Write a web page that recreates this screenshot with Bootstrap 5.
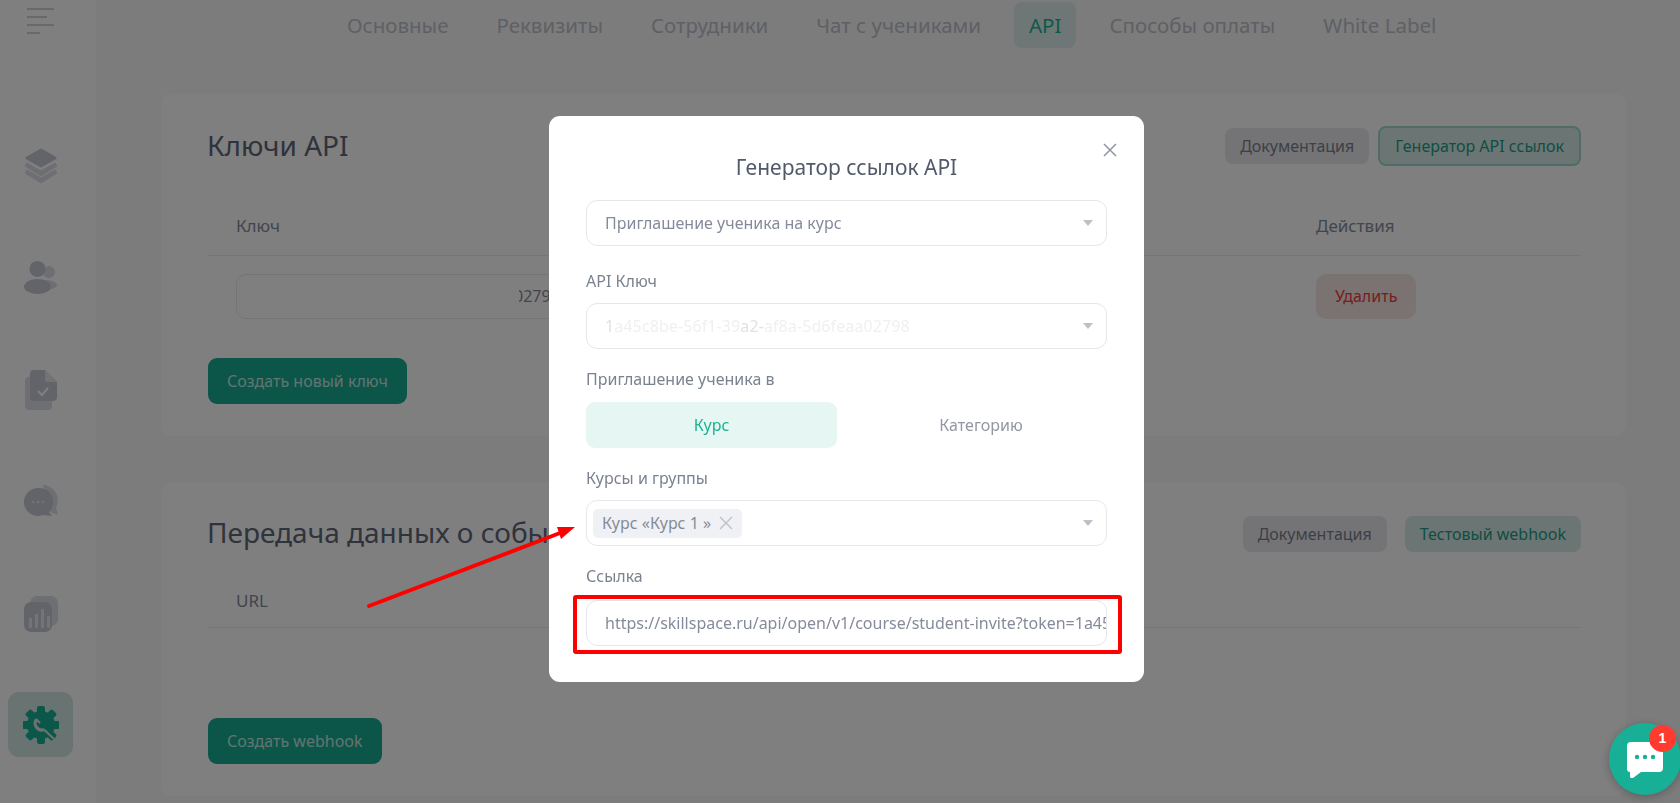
<!DOCTYPE html>
<html lang="ru">
<head>
  <meta charset="UTF-8">
  <title>Настройки – API</title>
  <link href="https://cdn.jsdelivr.net/npm/bootstrap@5.3.3/dist/css/bootstrap.min.css" rel="stylesheet">
  <style>
    html, body { height: 100%; overflow: hidden; }
    body { font-family: "Noto Sans", "Open Sans", sans-serif; background: #f9f9f9; color: #5f6678; }

    /* Боковая панель */
    .side-bar { width: 96px; height: 803px; background: #fff; flex: none; padding-top: 8px; }
    .burger { width: 27px; margin-left: 27px; height: 28px; }
    .burger i { display: block; height: 2px; background: #d0d2d6; margin-bottom: 6px; }
    .burger i:nth-child(2) { width: 20px; }
    .burger i:nth-child(4) { width: 13px; }
    .side-item { width: 65px; height: 65px; margin-left: 8px; border-radius: 11px; }
    .side-item + .side-item { margin-top: 47px; }
    .side-item + .side-item.on { margin-top: 46px; }
    .side-list { margin-top: 97px; }
    .side-item.on { background: #d2e6e2; }

    /* Вкладки */
    .top-tabs { margin-left: 236px; padding-top: 2px; gap: 18px; height: 94px; align-items: flex-start; }
    .top-tabs .nav-link { color: #bdc0ca; font-size: 20.5px; line-height: 46px; padding: 0 15px; border-radius: 8px; }
    .top-tabs .nav-link.active { background: #dcefeb; color: #1ab394; }

    /* Карточки */
    .main-col { width: 1584px; }
    .pane { margin-left: 65px; width: 1465px; background: #fff; border: 0; border-radius: 11px; padding: 32px 45px 32px 47px; }
    .pane + .pane { margin-top: 46px; }
    .pane-head { height: 40px; }
    .pane-title { font-size: 28px; font-weight: 400; color: #5f6678; margin: 0 0 0 -1px; line-height: 40px; padding-bottom: 3px; }
    .pane-table { margin: 0; --bs-table-bg: transparent; }
    .pane-table th { font-weight: 400; font-size: 17px; color: #858b9a; border-bottom: 1px solid #eaebee; padding: 0 0 16px 28px; height: 89px; vertical-align: bottom; }
    .pane-table td { border: 0; padding: 18px 0 0 28px; }
    .pane-table th.act-col { width: 293px; }
    .pane-table.short th { height: 74px; padding-bottom: 14px; }
    .key-box { height: 45px; border: 1px solid #e9eaec; border-radius: 10px; width: 800px; font-size: 16px; line-height: 43px; color: #858b9a; padding-left: 282px; }
    .key-box span { display: block; width: 40px; overflow: hidden; text-indent: -5px; white-space: nowrap; }

    .btn-pair { gap: 18px; }
    .btn-soft { font-size: 16px; border: 0; border-radius: 8px; padding: 0 15px; height: 36px; line-height: 36px; }
    .btn-grey { background: #e8e9ed; color: #7b7f8a; }
    .btn-mint { background: #d6ebe7; color: #1f9c85; }
    .btn-mint.ring { border: 2px solid #9fd8cc; height: 40px; line-height: 36px; margin-left: 9px; }
    .btn-red { background: #f6e4e4; color: #ee3a3a; height: 45px; line-height: 45px; padding: 0 19px; border-radius: 10px; }
    .btn-main { background: #18ab93; color: #c5e8e0; font-size: 16px; height: 46px; padding: 0 19px; border: 0; border-radius: 9px; }
    .btn-main:hover { background: #18ab93; color: #c5e8e0; }
    .foot-key { margin-top: 39px; }
    .foot-hook { margin-top: 90px; }

    /* Модальное окно */
    .gen-dialog { max-width: none; width: 595px; margin: 116px 0 0 549px; }
    .gen-dialog .modal-content { border: 0; border-radius: 11px; height: 566px; padding: 0 37px; display: block; }
    .gen-title { text-align: center; font-size: 21px; font-weight: 400; color: #525a69; margin: 0; padding-top: 37px; line-height: 28px; height: 84px; }
    .gen-close { position: absolute; top: 26px; right: 26px; width: 16px; height: 16px; padding: 0; border: 0; background: none; line-height: 0; }
    .gen-group { margin-bottom: 19px; }
    .gen-group:first-of-type { margin-bottom: 24px; }
    .gen-label { display: block; font-size: 16px; line-height: 22px; margin-bottom: 11px; color: #7a8290; }
    .gen-label.gap-m { margin-bottom: 12px; }
    .gen-label.gap-l { margin-bottom: 13px; }
    .gen-field { height: 46px; border: 1px solid #e6e7ea; border-radius: 11px; padding: 0 13px 0 18px; font-size: 16px; color: #858b9a; white-space: nowrap; overflow: hidden; }
    .gen-field::after { content: ""; border: 5px solid transparent; border-top: 6px solid #bcc0c8; border-bottom: 0; flex: none; }
    .gen-field.plain::after { display: none; }
    .gen-field.plain { padding-right: 0; }
    .gen-field.chips { padding-left: 6px; }
    .key-faint { color: #eff0f0; letter-spacing: .1px; filter: blur(.5px); }
    .key-faint b { font-weight: 400; color: #e0e2e5; }
    .gen-switch { height: 46px; margin-bottom: 19px; }
    .gen-switch div { flex: none; border-radius: 9px; line-height: 46px; text-align: center; font-size: 16px; color: #9297a3; }
    .gen-switch .picked { width: 251px; background: #e6f6f2; color: #1ab394; }
    .gen-switch .rest { width: 270px; padding-left: 18px; }
    .gen-chip { height: 29px; background: #f0f1f5; border-radius: 5px; padding: 0 9px; line-height: 29px; color: #858b9a; }

    /* Чат-виджет */
    .chat-fab { position: fixed; z-index: 1060; left: 1609px; top: 723px; width: 72px; height: 72px; border-radius: 50%; background: #17b096; box-shadow: 0 2px 10px rgba(0,0,0,.25); }
    .chat-fab em { position: absolute; left: 40px; top: 2px; width: 27px; height: 27px; border-radius: 50%; background: #ff3b30; color: #fff; font: 700 14px/27px "Liberation Sans", sans-serif; text-align: center; }
    .note-layer { position: fixed; inset: 0; z-index: 1070; pointer-events: none; }
  </style>
</head>
<body>
  <div class="d-flex">
    <!-- Боковая панель -->
    <aside class="side-bar">
      <div class="burger"><i></i><i></i><i></i><i></i></div>
      <div class="side-list">
        <div class="side-item d-flex align-items-center justify-content-center">
          <svg width="32" height="36" viewBox="0 0 32 36">
            <path d="M2 22 16 30 30 22 32 25 16 35 0 25Z" fill="#dcdee4" stroke="#dcdee4" stroke-linejoin="round"/>
            <path d="M2 15 16 23 30 15 32 18 16 28 0 18Z" fill="#dcdee4" stroke="#dcdee4" stroke-linejoin="round"/>
            <path d="M16 2 30 10 16 18 2 10Z" fill="#c6c9d2" stroke="#c6c9d2" stroke-width="3" stroke-linejoin="round"/>
          </svg>
        </div>
        <div class="side-item d-flex align-items-center justify-content-center">
          <svg width="33" height="33" viewBox="0 0 33 33"><circle cx="25" cy="11" r="6" fill="#dcdee4"/><ellipse cx="21" cy="24" rx="12" ry="5" fill="#dcdee4"/><circle cx="13.500" cy="8" r="8" fill="#c6c9d2"/><ellipse cx="13.500" cy="25.500" rx="13.500" ry="7.500" fill="#c6c9d2"/></svg>
        </div>
        <div class="side-item d-flex align-items-center justify-content-center">
          <svg width="32" height="40" viewBox="0 0 32 40"><rect x="0" y="7" width="27" height="33" rx="4" fill="#dcdee4"/><path d="M9 0h11l12 12v15a4 4 0 0 1-4 4H9a4 4 0 0 1-4-4V4a4 4 0 0 1 4-4Z" fill="#c6c9d2"/><path d="M20 0l12 12H22a2 2 0 0 1-2-2Z" fill="#e4e6ea"/><path d="M13 21l4 4 6-7" fill="none" stroke="#fff" stroke-width="2"/></svg>
        </div>
        <div class="side-item d-flex align-items-center justify-content-center">
          <svg width="34" height="34" viewBox="0 0 34 34"><path d="M19 0a15 15 0 0 1 13 22l2 8-8-3Z" fill="#dcdee4"/><path d="M15 3a14 14 0 0 1 10 24l3 4-9-1A14 14 0 1 1 15 3Z" fill="#c6c9d2"/><g fill="#e4e6ea"><circle cx="9" cy="17" r="1.3"/><circle cx="14" cy="17" r="1.3"/><circle cx="19" cy="17" r="1.3"/></g></svg>
        </div>
        <div class="side-item d-flex align-items-center justify-content-center">
          <svg width="34" height="36" viewBox="0 0 34 36"><rect x="6" y="0" width="28" height="30" rx="7" fill="#dcdee4"/><rect x="0" y="6" width="28" height="30" rx="7" fill="#c6c9d2"/><g fill="#e6e8ec"><rect x="5" y="22" width="3" height="10"/><rect x="11" y="18" width="3" height="14"/><rect x="17" y="13" width="3" height="19"/><rect x="23" y="20" width="3" height="12"/></g></svg>
        </div>
        <div class="side-item on d-flex align-items-center justify-content-center">
          <svg width="36" height="38" viewBox="0 0 36 38">
            <g fill="#17b096">
              <circle cx="18" cy="19" r="14"/>
              <rect x="14" y="0" width="8" height="38" rx="2"/>
              <rect x="14" y="0" width="8" height="38" rx="2" transform="rotate(45 18 19)"/>
              <rect x="14" y="0" width="8" height="38" rx="2" transform="rotate(90 18 19)"/>
              <rect x="14" y="0" width="8" height="38" rx="2" transform="rotate(135 18 19)"/>
            </g>
            <path d="M13.500 13.500A6.500 6.500 0 0 0 21 23.500" fill="none" stroke="#d2e6e2" stroke-width="3.200"/>
            <path d="M13 13 17 17M21 23.500 31 33" fill="none" stroke="#d2e6e2" stroke-width="2.200"/>
          </svg>
        </div>
      </div>
    </aside>

    <div class="main-col">
      <!-- Вкладки -->
      <ul class="nav top-tabs">
        <li class="nav-item"><a class="nav-link" href="#">Основные</a></li>
        <li class="nav-item"><a class="nav-link" href="#">Реквизиты</a></li>
        <li class="nav-item"><a class="nav-link" href="#">Сотрудники</a></li>
        <li class="nav-item"><a class="nav-link" href="#">Чат с учениками</a></li>
        <li class="nav-item"><a class="nav-link active" href="#">API</a></li>
        <li class="nav-item"><a class="nav-link" href="#">Способы оплаты</a></li>
        <li class="nav-item"><a class="nav-link" href="#">White Label</a></li>
      </ul>

      <!-- Ключи API -->
      <section class="card pane">
        <div class="pane-head d-flex justify-content-between align-items-center">
          <h2 class="pane-title">Ключи API</h2>
          <div class="d-flex align-items-center">
            <button class="btn btn-soft btn-grey">Документация</button>
            <button class="btn btn-soft btn-mint ring">Генератор API ссылок</button>
          </div>
        </div>
        <table class="table pane-table">
          <thead><tr><th>Ключ</th><th class="act-col">Действия</th></tr></thead>
          <tbody><tr>
            <td><div class="key-box"><span>02798</span></div></td>
            <td><button class="btn btn-soft btn-red">Удалить</button></td>
          </tr></tbody>
        </table>
        <div class="foot-key"><button class="btn btn-main">Создать новый ключ</button></div>
      </section>

      <!-- Передача данных -->
      <section class="card pane">
        <div class="pane-head d-flex justify-content-between align-items-center">
          <h2 class="pane-title">Передача данных о событиях</h2>
          <div class="d-flex align-items-center btn-pair">
            <button class="btn btn-soft btn-grey">Документация</button>
            <button class="btn btn-soft btn-mint">Тестовый webhook</button>
          </div>
        </div>
        <table class="table pane-table short">
          <thead><tr><th>URL</th></tr></thead>
        </table>
        <div class="foot-hook"><button class="btn btn-main">Создать webhook</button></div>
      </section>
    </div>
  </div>

  <div class="modal-backdrop show"></div>

  <!-- Генератор ссылок -->
  <div class="modal d-block">
    <div class="modal-dialog gen-dialog">
      <div class="modal-content">
        <button class="gen-close" aria-label="Закрыть"><svg width="16" height="16" viewBox="0 0 16 16"><path d="M2 2l12 12M14 2 2 14" stroke="#9298a4" stroke-width="1.6"/></svg></button>
        <h5 class="gen-title">Генератор ссылок API</h5>
        <div class="gen-group">
          <div class="gen-field d-flex align-items-center justify-content-between">Приглашение ученика на курс</div>
        </div>
        <div class="gen-group">
          <label class="gen-label">API Ключ</label>
          <div class="gen-field d-flex align-items-center justify-content-between"><span class="key-faint"><b>1</b>a45c8be-56f1-39<b>a2-</b>af8a-5d6feaa02798</span></div>
        </div>
        <label class="gen-label gap-m">Приглашение ученика в</label>
        <div class="gen-switch d-flex">
          <div class="picked">Курс</div>
          <div class="rest">Категорию</div>
        </div>
        <div class="gen-group">
          <label class="gen-label">Курсы и группы</label>
          <div class="gen-field chips d-flex align-items-center justify-content-between">
            <span class="gen-chip d-flex align-items-center gap-2">Курс «Курс 1 » <svg width="14" height="14" viewBox="0 0 14 14"><path d="M1 1l12 12M13 1 1 13" stroke="#bcc0c8" stroke-width="1.4"/></svg></span>
          </div>
        </div>
        <div class="gen-group">
          <label class="gen-label gap-l">Ссылка</label>
          <div class="gen-field plain d-flex align-items-center">https://skillspace.ru/api/open/v1/course/student-invite?token=1a45c8be-56f1-39a2-af8a-5d6feaa02798</div>
        </div>
      </div>
    </div>
  </div>

  <!-- Чат -->
  <div class="chat-fab d-flex align-items-center justify-content-center">
    <svg width="36" height="37" viewBox="0 0 36 37"><path d="M4 1h28a4 4 0 0 1 4 4v22a4 4 0 0 1-4 4H14l-8 6a2 2 0 0 1-3-2v-4a3 3 0 0 1-3-3V5a4 4 0 0 1 4-4Z" fill="#fff"/><g fill="#17b096"><circle cx="10" cy="16" r="2.2"/><circle cx="18" cy="16" r="2.2"/><circle cx="26" cy="16" r="2.2"/></g></svg>
    <em>1</em>
  </div>

  <!-- Пометки поверх скриншота -->
  <svg class="note-layer" width="1680" height="803" viewBox="0 0 1680 803">
    <rect x="575" y="597" width="545" height="55" fill="none" stroke="#f00" stroke-width="4" rx="1"/>
    <line x1="369" y1="606" x2="560" y2="533" stroke="#f00" stroke-width="4" stroke-linecap="round"/>
    <path d="M575 527 557 527 561 539Z" fill="#f00"/>
  </svg>

  <script src="https://cdn.jsdelivr.net/npm/bootstrap@5.3.3/dist/js/bootstrap.bundle.min.js"></script>
</body>
</html>
